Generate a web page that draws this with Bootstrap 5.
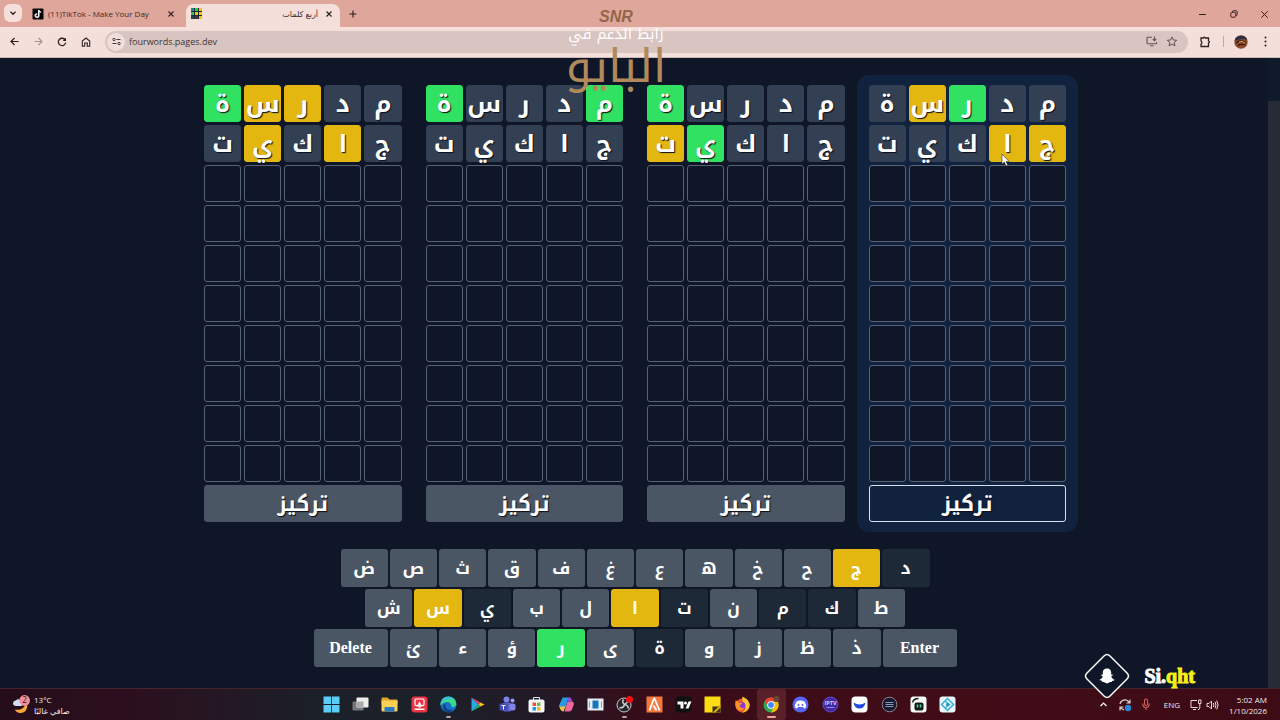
<!DOCTYPE html>
<html lang="ar">
<head>
<meta charset="utf-8">
<meta name="viewport" content="width=device-width, initial-scale=1">
<title>أربع كلمات</title>
<link rel="stylesheet" href="https://cdn.jsdelivr.net/npm/bootstrap@5.3.0/dist/css/bootstrap.min.css">
<script src="https://cdn.jsdelivr.net/npm/bootstrap@5.3.0/dist/js/bootstrap.bundle.min.js"></script>
<style>
:root{--strip:#dfa69b;--bar:#f5dfda;--page:#0f1628;--gold:#e3b710;--green:#31e161;--ink:#3b2a2a}
body{font-family:"Open Sans","DejaVu Sans",sans-serif;font-size:8px;line-height:12px;color:var(--ink);background:var(--page)}
svg{display:block;flex:none}
.bare{background:none;border:0;padding:0;color:inherit;display:flex;align-items:center;justify-content:center}
.strip{background:var(--strip);height:27px;padding:4px 0 0 4px}
.chev{width:18px;height:18px;border-radius:6px;background:var(--bar)}
.tab-item{height:23px}
.tab-item a{color:inherit;text-decoration:none}
.tab-a{width:160px;padding:0 12px 4px 6px}
.tab-b{width:154px;padding:0 8px 4px 5px;background:var(--bar);border-radius:8px 8px 0 0}
.new-tab{width:12px;height:12px;margin:4px 0 0 7px}
.wctl{width:31px;height:20px}
.tools{background:var(--bar);height:31px;padding:0 9px 1px 8px;border-bottom:1px solid #cdb9bb}
.nav-set{gap:12px}
.nav-btn{width:12px;height:12px}
.omni{background:#d8c4c0;height:22px;border-radius:11px;padding:0 10px 0 2px;margin:0 11px 0 13px}
.site{width:18px;height:18px;border-radius:50%;background:#f0dedb}
.omni input{background:none;border:0;outline:0;font-size:9px;line-height:14px;color:#3f3433;padding:0;min-width:0}
.sep{width:1px;height:11px;background:#c9a7a2;margin:0 10px 0 11px}
.stage{padding:17px 10px 0 0}
.track{position:absolute;right:0;top:0;bottom:0;width:12px;padding-top:43px;background:#0f1a2b}
.thumb{background:#262b35;height:100%}
.boards{max-width:886px}
.wboard{padding:10px 12px;border-radius:12px;display:grid;grid-template-columns:repeat(5,minmax(0,1fr));grid-auto-rows:37px;gap:3px;font-family:"Open Sans","DejaVu Sans",sans-serif;font-weight:700;font-size:24px;color:#fff;text-align:center}
.wboard,.key,.mark-top{font-family:"Noto Kufi Arabic","DejaVu Sans",sans-serif}
.wboard.on{background:#11223f}
.tile{border:1px solid #566275;border-radius:3px;background:var(--page);line-height:36px;text-shadow:1px 1px 1px #0b0f18}
.tile.miss{background:#334054;border-color:#334054}
.tile.near{background:var(--gold);border-color:var(--gold)}
.tile.hit{background:var(--green);border-color:var(--green)}
.focus-btn{grid-column:1/-1;background:#4b5665;border:1px solid #4b5665;border-radius:3px;color:#fff;font-size:21px;font-weight:700;line-height:34px;padding:0;text-shadow:1px 1px 1px #0b0f18}
.on .focus-btn{background:#11223f;border-color:#d3e2f2}
.keys{gap:2px;margin-top:17px}
.krow{gap:2px;width:100%}
.k1{max-width:589px}.k2{max-width:540px}.k3{max-width:643px}
.key{flex:1 1 0;min-width:0;height:38px;border:0;border-radius:3px;padding:0;background:#4b5665;color:#fff;font-weight:700;font-size:17px;line-height:38px}
.key.wide{flex:0 0 74px;font-family:"Liberation Serif",serif;font-size:16px}
.key.off{background:#1e2938}
.key.near{background:var(--gold)}.key.hit{background:var(--green)}
.dock{height:32px;color:#f3e8ea;line-height:11px;background:linear-gradient(90deg,#250d19 0,#2c0f1e 10%,#1b2029 25%,#1c2029 34%,#221a27 42%,#360d18 50%,#420c17 75%,#3c0b15);border-top:1px solid #46242c}
.dock>*{flex:1 1 0}
.dock .apps{flex:0 1 646px}
.tray{gap:10px;padding-right:13px}
.app{flex:1 1 0;height:31px;position:relative}
.app.run::after{content:"";position:absolute;bottom:2px;width:5px;height:2px;border-radius:1px;background:#aaa4aa}
.app.cur{background:#5a2029;border-radius:3px}
.app.cur::after{width:9px;background:#f0a39b}
.mark-top{position:absolute;left:50%;top:8px;margin-left:-92px;width:136px;text-align:center;pointer-events:none}
.mk1{font:italic 700 16px/18px "Liberation Sans",sans-serif;color:#93664a}
.mk2{font-size:15px;line-height:17px;color:#fff}
.mk3{font-size:46px;line-height:48px;color:#b08a5b}
.mark-snap{position:absolute;right:85px;bottom:21px;gap:14px}
.mark-snap b{font:700 20px/22px "Liberation Serif",serif;color:#fff;-webkit-text-stroke:1px}
.mark-snap i{font-style:normal;color:#f6f01a}
.ptr{position:absolute;left:11px;top:27px}
</style>
</head>
<body class="vh-100 d-flex flex-column overflow-hidden position-relative">
<header dir="ltr">
  <div class="strip d-flex">
    <button class="bare chev" aria-label="Search tabs"><svg width="8" height="8" viewBox="0 0 8 8" fill="none" stroke="#222" stroke-width="1.3"><path d="M1.5 2.8 4 5.3 6.500 2.800"/></svg></button>
    <div class="tab-item tab-a d-flex align-items-center ms-1">
      <a href="#tiktok" class="d-flex align-items-center gap-1 me-auto"><svg width="12" height="12" viewBox="0 0 12 12"><rect width="11" height="11" x=".5" y=".5" rx="1" fill="#050505"/><path d="M6.600 2v5.500A1.700 1.700 0 1 1 5 5.800M6.600 2.200c.2 1.300 1 1.900 2.200 2" fill="none" stroke="#f2496b" stroke-width="1.500" transform="translate(.4 .3)"/><path d="M6.600 2v5.500A1.700 1.700 0 1 1 5 5.800M6.600 2.200c.2 1.300 1 1.900 2.200 2" fill="none" stroke="#d9ffff" stroke-width="1.300"/></svg><span>(11)TikTok - Make Your Day</span></a>
      <button class="bare" aria-label="Close tab"><svg width="6" height="6" viewBox="0 0 6 6" stroke="#3b2020" stroke-width="1.100"><path d="M.5.5l5 5M5.500.5l-5 5"/></svg></button>
    </div>
    <div class="tab-item tab-b d-flex align-items-center gap-2">
      <a href="#game" class="d-flex align-items-center justify-content-between flex-fill"><svg width="11" height="11" viewBox="0 0 11 11"><path fill="#2f3a48" d="M0 0h11v11H0z"/><path fill="#31c765" d="M4 0h3v3H4zM0 4h3v3H0z"/><path fill="#1a8f83" d="M0 0h3v3H0z"/><path fill="#efc31b" d="M8 0h3v3H8zM4 4h3v3H4zM8 4h3v3H8zM8 8h3v3H8z"/><path stroke="#1b222c" stroke-width=".7" d="M3.500 0v11M7.500 0v11M0 3.500h11M0 7.500h11"/></svg><span dir="rtl">أربع كلمات</span></a>
      <button class="bare" aria-label="Close tab"><svg width="6" height="6" viewBox="0 0 6 6" stroke="#222" stroke-width="1.100"><path d="M.5.5l5 5M5.500.5l-5 5"/></svg></button>
    </div>
    <button class="bare new-tab" aria-label="New tab"><svg width="8" height="8" viewBox="0 0 8 8" stroke="#2b1c1c" stroke-width="1.100"><path d="M4 .5v7M.5 4h7"/></svg></button>
    <div class="d-flex ms-auto">
      <button class="bare wctl" aria-label="Minimize"><svg width="7" height="7" viewBox="0 0 7 7" stroke="#3b2020"><path d="M0 3.500h7"/></svg></button>
      <button class="bare wctl" aria-label="Restore"><svg width="8" height="8" viewBox="0 0 8 8" stroke="#3b2020" fill="none"><rect x=".8" y="2.300" width="4.900" height="4.900" rx="1"/><path d="M2.500 2.300V1.500q0-.7.700-.7h3.200q.8 0 .8.800v3q0 .9-.8.900"/></svg></button>
      <button class="bare wctl" aria-label="Close"><svg width="7" height="7" viewBox="0 0 7 7" stroke="#3b2020"><path d="M.3.3l6.400 6.400M6.700.3.300 6.700"/></svg></button>
    </div>
  </div>
  <div class="tools d-flex align-items-center">
    <div class="nav-set d-flex">
      <button class="bare nav-btn" aria-label="Back"><svg width="9" height="9" viewBox="0 0 9 9" fill="none" stroke="#2b2020" stroke-width="1.200"><path d="M8.500 4.500H1M4.500 1 1 4.500 4.500 8"/></svg></button>
      <button class="bare nav-btn" aria-label="Forward"><svg width="9" height="9" viewBox="0 0 9 9" fill="none" stroke="#a89390" stroke-width="1.100"><path d="M.5 4.500H8M4.500 1 8 4.500 4.500 8"/></svg></button>
      <button class="bare nav-btn" aria-label="Reload"><svg width="10" height="10" viewBox="0 0 10 10" fill="none" stroke="#2b2020" stroke-width="1.300"><path d="M8.200 3A3.700 3.700 0 1 0 8.700 5.500"/><path d="M9 .8v3.300H5.700z" fill="#2b2020" stroke="none"/></svg></button>
      <button class="bare nav-btn" aria-label="Home"><svg width="10" height="10" viewBox="0 0 10 10" fill="none" stroke="#2b2020" stroke-width="1.100"><path d="M1.300 9.200V4L5 1l3.700 3v5.200H6.300V6H3.700v3.200z"/></svg></button>
    </div>
    <div class="omni d-flex align-items-center flex-fill">
      <button class="bare site" aria-label="Site information"><svg width="9" height="9" viewBox="0 0 9 9" fill="none" stroke="#4a3b3a"><circle cx="2" cy="2.500" r="1.200"/><path d="M4.500 2.500h4M.5 6.500h4"/><circle cx="7" cy="6.500" r="1.200"/></svg></button>
      <input class="ms-1" aria-label="Address" value="fourwords.pages.dev">
      <button class="bare ms-auto me-2" aria-label="Install"><svg width="12" height="11" viewBox="0 0 12 11" fill="none" stroke="#655453" stroke-width="1.100"><path d="M6 1.200H1.800q-.8 0-.8.800v5q0 .8.800.8h8q.8 0 .8-.8V6M4 9.800h3.600M8.500.5v4M6.800 3l1.700 1.700L10.200 3"/></svg></button>
      <button class="bare" aria-label="Bookmark"><svg width="12" height="11" viewBox="0 0 12 11" fill="none" stroke="#655453"><path d="M6 .9l1.400 3.100 3.400.3-2.600 2.200.8 3.300L6 8.100 3 9.800l.8-3.300-2.600-2.200 3.400-.3z"/></svg></button>
    </div>
    <button class="bare" aria-label="Extensions"><svg width="13" height="12" viewBox="0 0 13 12" fill="none" stroke="#2b2020" stroke-width="1.300"><path d="M2 2h2.300q.9-1.600 1.900 0H9.500v3q2 1 0 2v3.500H2V8.200q1.800-1.600 0-3.300z"/></svg></button>
    <span class="sep"></span>
    <div class="nav-set d-flex align-items-center">
    <button class="bare" aria-label="Profile"><svg width="14" height="14" viewBox="0 0 14 14"><circle cx="7" cy="7" r="6.700" fill="#8c4a25"/><path d="M.5 6A6.700 6.700 0 0 1 13.500 5.500Q9 2.500.5 6" fill="#26304a"/><path d="M2 8q4-4 10-.5M4 10.500q3-2 7-.5" stroke="#2e1a12" fill="none" stroke-width="1.300"/><path d="M5 7q3-2 6 1" stroke="#d99a5e" fill="none"/></svg></button>
    <button class="bare" aria-label="Menu"><svg width="11" height="11" viewBox="0 0 11 11" fill="#2b2020"><circle cx="5.500" cy="1.500" r="1"/><circle cx="5.500" cy="5.500" r="1"/><circle cx="5.500" cy="9.500" r="1"/></svg></button>
    </div>
  </div>
</header>

<main class="stage position-relative flex-fill" dir="rtl">
  <div class="boards row row-cols-4 g-0 mx-auto" id="boards"></div>
  <div class="keys d-flex flex-column align-items-center" id="keys"></div>
  <div class="track"><div class="thumb"></div></div>
</main>

<footer class="dock d-flex align-items-center" dir="ltr">
  <div class="d-flex align-items-center gap-1 ps-2 ms-1">
    <svg width="18" height="20" viewBox="1 0 20 22"><path d="M17 9a6.500 6.500 0 1 1-13 7q9 2 13-7" fill="#f6a938"/><path d="M5 12a3 3 0 0 1 .3-6 4 4 0 0 1 7 2.500 2 2 0 0 1-1 3.500z" fill="#cfe0f5"/><circle cx="15" cy="6" r="6" fill="#ef8f9d"/><text x="15" y="9" font-size="9" text-anchor="middle" fill="#401018">2</text></svg>
    <div><div>13°C</div><div dir="rtl">صافي غالبًا</div></div>
  </div>
  <nav class="apps d-flex" id="apps" aria-label="Apps"></nav>
  <div class="tray d-flex align-items-center justify-content-end">
    <svg width="9" height="9" viewBox="0 0 9 9" fill="none" stroke="#fff" stroke-width="1.200"><path d="M1.500 6 4.500 3l3 3"/></svg>
    <svg width="14" height="14" viewBox="0 0 14 14" fill="none" stroke="#ddd2d5" stroke-width="1.200"><path d="M2 6a5 5 0 0 1 8.500-2.500L12 5M12 1.500V5H8.500M2 12.500V9h3.500M2 9l1.500 1.500L6 12"/><circle cx="10" cy="10" r="3.200" fill="#2a86d8" stroke="none"/></svg>
    <svg class="me-1" width="8" height="13" viewBox="0 0 8 13" fill="none" stroke="#d4605c" stroke-width="1.100"><rect x="2.500" y="1" width="3" height="6.500" rx="1.500"/><path d="M.7 5.500q0 4 3.300 4t3.300-4M4 9.500V12"/></svg>
    <span>ENG</span>
    <div class="d-flex gap-1">
    <svg width="12" height="12" viewBox="0 0 12 12" fill="none" stroke="#e8dade"><path d="M7 1.500H1v7h6.500M3 10.500h3M8.500 1h2.500v3.500H8.500zM9.800 4.500V9q0 1.500-2 1.500"/></svg>
    <svg width="13" height="12" viewBox="0 0 13 12" fill="none" stroke="#e8dade"><path d="M1 4.500h2L5.500 2v8L3 7.500H1zM7.300 4q1.200 2 0 4M9 2.700q2 3.300 0 6.600M10.700 1.500q2.800 4.500 0 9"/></svg>
    </div>
    <div class="text-end"><div>5:02 AM</div><div>1/10/2026</div></div>
  </div>
</footer>

<div class="mark-top" dir="rtl"><div class="mk1" dir="ltr">SNR</div><div class="mk2">رابط الدعم في</div><div class="mk3">البايو</div></div>
<div class="mark-snap d-flex align-items-center" dir="ltr">
  <svg width="46" height="46" viewBox="0 0 46 46"><path d="M20 3q3-3 6 0l17 17q3 3 0 6L26 43q-3 3-6 0L3 26q-3-3 0-6z" fill="#0f1628" stroke="#fff" stroke-width="1.500"/><path d="M23 15.500c3 0 4.200 2 4.200 4.200v2l1.500-.3.200.8-1.600 1c.5 1.800 1.600 3 3.300 3.500-.2 1-1.500 1-2.500 1.300l-.4 1c-1.500-.3-2.400.2-4.700 1.500-2.300-1.300-3.200-1.800-4.700-1.500l-.4-1c-1-.3-2.300-.3-2.500-1.300 1.700-.5 2.800-1.700 3.300-3.500l-1.600-1 .2-.8 1.500.3v-2c0-2.200 1.200-4.200 4.200-4.200z" fill="#fff"/></svg>
  <b>Si.<i>qht</i></b>
</div>

<script>
// m = miss, n = near, h = hit; letters are read right to left
const guesses = ['مدرسة', 'جاكيت'];
const results = [['mmhnm', 'nnmmm'], ['mmmmh', 'mmmhn'], ['hmmmh', 'mmmmm'], ['mmnnh', 'mnmnm']];
const cls = {m: 'miss', n: 'near', h: 'hit', o: 'off'};
const pointer = '<svg class="ptr" width="9" height="14" viewBox="0 0 9 14"><path d="M1 1v10l2.300-2 1.700 4 1.700-.8L5 8.500h3z" fill="#fff" stroke="#333" stroke-width=".6"/></svg>';
document.getElementById('boards').innerHTML = results.map((r, b) => {
  let t = '';
  for (let i = 0; i < 10; i++) for (let c = 0; c < 5; c++)
    t += i < 2 ? `<div class="tile position-relative ${cls[r[i][c]]}">${guesses[i][c]}${!b && i === 1 && c === 1 ? pointer : ''}</div>` : '<div class="tile"></div>';
  return `<div class="col"><div class="wboard ${b ? '' : 'on'}">${t}<button class="focus-btn">تركيز</button></div></div>`;
}).join('');
const rows = [['دجحخهعغفقثصض', 'on          '], ['طكمنتالبيسش', ' oo on  on '], ['ذظزوةىرؤءئ', '    o h   ']];
document.getElementById('keys').innerHTML = rows.map(([l, s], i) => {
  let k = [...l].map((ch, j) => `<button class="key ${cls[s[j]] || ''}">${ch}</button>`).join('');
  if (i === 2) k = '<button class="key wide">Enter</button>' + k + '<button class="key wide">Delete</button>';
  return `<div class="krow k${i + 1} d-flex">${k}</div>`;
}).join('');
const apps = [
 ['Start','<path fill="#5ccdf7" d="M0 0h7.600v7.600H0zM8.400 0H16v7.600H8.400zM0 8.400h7.600V16H0zM8.400 8.400H16V16H8.400z"/>'],
 ['Task view','<rect x="0" y="5" width="11" height="9" rx="1" fill="#77777c"/><rect x="4" y="1" width="12" height="10" rx="1" fill="#eee"/><path fill="#aaa" d="M4 5h7v6H4z"/>'],
 ['Files','<path fill="#e0a32e" d="M0 2q0-1 1-1h5l2 2h7q1 0 1 1v3H0z"/><rect y="4" width="16" height="11" rx="1" fill="#fbd256"/><path fill="#2877c9" d="M3 15v-3.500q0-1 1-1h8q1 0 1 1V15z"/>'],
 ['Recorder','<rect width="16" height="16" rx="3" fill="#ee3346"/><rect x="3.500" y="2.500" width="9" height="6.500" rx="1" fill="none" stroke="#fff" stroke-width="1.200"/><path fill="#fff" d="m8 5 3 5H9v1H7v-1H5zM3 12h10v1.500H3z"/>'],
 ['Edge','<circle cx="8" cy="8" r="8" fill="#1572c4"/><path fill="#40d88b" d="M8 0a8 8 0 0 1 8 8q-1 3-5 2.500 0-5-5-5Q2 6 0 9 0 0 8 0"/><path fill="#36b9ee" d="M0 8a8 8 0 0 1 13-6Q3 1 0 8"/><path fill="#123f86" d="M5 9q0 5 8 4.500Q8 18 3.500 14 1 8 5 7z"/>','run'],
 ['Play','<path fill="#25a9e8" d="M2 1v14l7-7z"/><path fill="#e8434f" d="m2 1 9 5-2 2z"/><path fill="#fbc524" d="m11 6 4 2-4 2-2-2z"/><path fill="#2ab461" d="m9 8 2 2-9 5z"/>'],
 ['Teams','<circle cx="7" cy="3" r="3" fill="#7b83eb"/><circle cx="13" cy="4" r="2" fill="#9aa0f2"/><rect x="3" y="6" width="9" height="9" rx="2" fill="#5a60ce"/><rect x="10" y="7" width="6" height="7" rx="2" fill="#8085e8"/><rect y="7" width="8" height="7" rx="1" fill="#444bb5"/><path fill="none" stroke="#fff" d="M2 9h4M4 9v4"/>'],
 ['Store','<path fill="none" stroke="#dde8f2" d="M5 4V1h6v3"/><rect y="3" width="16" height="13" rx="2" fill="#f4f8fa"/><path fill="#ee5038" d="M4 6h3.500v3.500H4z"/><path fill="#7bb83c" d="M8.500 6H12v3.500H8.500z"/><path fill="#2499e4" d="M4 10.500h3.500V14H4z"/><path fill="#f7b51d" d="M8.500 10.500H12V14H8.500z"/>'],
 ['Copilot','<path fill="#259be5" d="M4 1h6L7 11H1q-1-1 0-3z"/><path fill="#ef679c" d="M9 5h5q2 1 1 4l-2 5-2 1H6z"/><path fill="#efc342" d="M1 10h6l-2 5Q2 15 1 10"/><path fill="#9350d5" d="M9 1h3l2 4H9z"/>'],
 ['Viewer','<rect y="2" width="16" height="12" fill="#e7edf1"/><path fill="#1676bd" d="M5 4h6v8H5z"/><path stroke="#8b9ba8" d="M2 5v6M14 5v6"/>'],
 ['OBS','<circle cx="7.500" cy="8.500" r="7" fill="#24242a" stroke="#ccc"/><path fill="none" stroke="#ccc" stroke-width="1.500" d="M7 3q-2 3 1 5 3 0 4 4M3 11q4 1 5-3l4-3"/><circle cx="13" cy="3" r="3.500" fill="#f60f16"/>','run'],
 ['FiveM','<rect width="16" height="16" fill="#f5783d"/><path fill="none" stroke="#fff" stroke-width="1.800" d="M3 14 7 3l1-1 5 12M7 9l3 5"/>'],
 ['TradingView','<rect width="16" height="16" rx="3" fill="#111"/><path fill="#fff" d="M2 5h6v7H5V8H2zM13 5h3l-3 7h-3z"/><circle cx="10" cy="6.500" r="1.500" fill="#fff"/>'],
 ['Notes','<path fill="#fbdc14" d="M0 0h16v16H0z"/><path fill="#373129" d="M8 10h8v6H8z"/><path fill="#d9a90f" d="m8 16 8-8v3l-5 5z"/>'],
 ['Firefox','<circle cx="8" cy="9" r="7" fill="#f65031"/><path fill="#ffc72e" d="M8 0q8 4 7 10-2 6-8 6 6-3 3-8-3-3-2-8"/><circle cx="7.500" cy="9" r="3.500" fill="#8a3bd1"/><path fill="#fb9427" d="M1 4q2 0 3 2l4 1-3 2q1 3 5 3-4 4-8 0-2-4-1-8"/>'],
 ['Chrome','<circle cx="7.500" cy="8.500" r="7.500" fill="#33a852"/><path fill="#ea4335" d="M1 5a7.500 7.500 0 0 1 13.300 0H8l-3 5z"/><path fill="#fbbc05" d="M14.300 5A7.500 7.500 0 0 1 7.500 16L11 9.500 9 5z"/><circle cx="7.500" cy="8.500" r="3.500" fill="#4285f4" stroke="#fff"/><circle cx="13" cy="2.500" r="3" fill="#6c4433"/>','run cur'],
 ['Discord','<circle cx="8" cy="8" r="8" fill="#5865f2"/><path fill="#fff" d="M4 5q4-2 8 0 2 3 1.500 6l-2 1-1-1.500h-5L4.500 12l-2-1Q2 8 4 5"/><circle cx="6" cy="8.500" r="1" fill="#5865f2"/><circle cx="10" cy="8.500" r="1" fill="#5865f2"/>'],
 ['IPTV','<circle cx="8" cy="8" r="7.500" fill="#412c9d" stroke="#6548d2"/><text x="8" y="8" font-size="5.500" font-weight="bold" fill="#d6c9ff" text-anchor="middle">IPTV</text><path stroke="#9d86ed" d="M4 11h8"/>'],
 ['Drop','<rect width="16" height="16" rx="4" fill="#fff"/><path fill="#2149e8" d="M2 6q6 4 12 0-1 6-6 6T2 6"/>'],
 ['Keyboard','<circle cx="8" cy="8" r="7.300" fill="#171a2d" stroke="#8f8394"/><path stroke="#8e94ba" d="M4 6h8M4 8h8M4 10h8"/>'],
 ['Phone','<rect width="16" height="16" rx="3" fill="#f7fbf8"/><rect x="4" y="6" width="9" height="8" rx="2" fill="#151c1a"/><path fill="none" stroke="#151c1a" stroke-width="1.300" d="M2 6q1-4 6-4"/><path stroke="#48dc91" stroke-width="1.500" d="M7 8v3M10 8v3"/>'],
 ['Sync','<rect width="16" height="16" rx="3" fill="#e9f8fd"/><path fill="none" stroke="#36afd9" stroke-width="1.500" d="m8 2 6 6-6 6-6-6zM6 5l4 3-4 3"/><circle cx="8" cy="8" r="1.500" fill="#258fc1"/>']
];
document.getElementById('apps').innerHTML = apps.map(([n, s, c]) => `<button class="bare app ${c || ''}" aria-label="${n}"><svg width="17" height="17" viewBox="-.5 -.5 17 17">${s}</svg></button>`).join('');
</script>
</body>
</html>
